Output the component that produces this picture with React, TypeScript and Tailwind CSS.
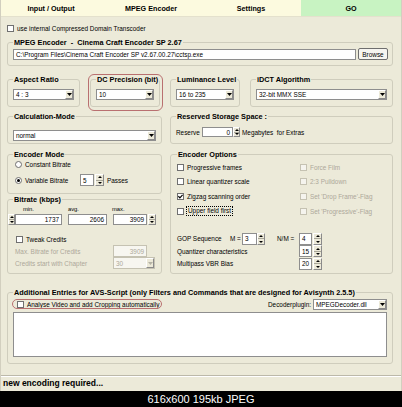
import React from "react";

type Kids = { children?: React.ReactNode; className?: string };

const Down = ({ c = "#000" }: { c?: string }) => (
  <svg width="5" height="3" viewBox="0 0 5 3">
    <path d="M0 0H5L2.5 3Z" fill={c} />
  </svg>
);
const UpS = ({ c = "#000" }: { c?: string }) => (
  <svg width="4" height="2" viewBox="0 0 4 2">
    <path d="M0 2H4L2 0Z" fill={c} />
  </svg>
);
const DownS = ({ c = "#000" }: { c?: string }) => (
  <svg width="4" height="2" viewBox="0 0 4 2">
    <path d="M0 0H4L2 2Z" fill={c} />
  </svg>
);

function Chk({ checked = false, disabled = false, className = "" }: { checked?: boolean; disabled?: boolean; className?: string }) {
  return (
    <span
      className={`w-[7px] h-[7px] shrink-0 border flex items-center justify-center ${
        disabled ? "border-[#c5c2b2] bg-[#f5f4ee]" : "border-[#707070] bg-white"
      } ${className}`}
    >
      {checked && (
        <svg width="5" height="5" viewBox="0 0 5 5">
          <path d="M0.4 2.2L1.9 3.8L4.6 0.9" stroke="#000" strokeWidth="1.2" fill="none" />
        </svg>
      )}
    </span>
  );
}

function Radio({ checked = false, className = "" }: { checked?: boolean; className?: string }) {
  return (
    <span className={`w-[7px] h-[7px] shrink-0 rounded-full border border-[#707070] bg-white flex items-center justify-center ${className}`}>
      {checked && <span className="w-[3px] h-[3px] rounded-full bg-black" />}
    </span>
  );
}

function Spin({ disabled = false, className = "" }: { disabled?: boolean; className?: string }) {
  const c = disabled ? "#b5b3a5" : "#000";
  return (
    <span className={`flex flex-col shrink-0 bg-[#ece9d8] border border-t-white border-l-white border-r-[#8a8a8a] border-b-[#8a8a8a] ${className}`}>
      <span className="flex-1 flex items-center justify-center border-b border-[#a8a698]">
        <UpS c={c} />
      </span>
      <span className="flex-1 flex items-center justify-center">
        <DownS c={c} />
      </span>
    </span>
  );
}

function Box({ children, className = "", disabled = false, right = false }: Kids & { disabled?: boolean; right?: boolean }) {
  return (
    <div
      className={`shrink-0 border flex items-center whitespace-nowrap overflow-hidden ${
        right ? "justify-end pr-[2px]" : "pl-[2px]"
      } ${disabled ? "border-[#c5c2b2] bg-[#f7f6f0] text-[#aca899]" : "border-[#8e8e8e] bg-white"} ${className}`}
    >
      {children}
    </div>
  );
}

function Sel({ value, className = "", disabled = false }: { value: string; className?: string; disabled?: boolean }) {
  return (
    <div
      className={`flex shrink-0 border ${
        disabled ? "border-[#c5c2b2] bg-[#f7f6f0] text-[#aca899]" : "border-[#8e8e8e] bg-white"
      } ${className}`}
    >
      <span className="flex-1 pl-[2px] flex items-center whitespace-nowrap overflow-hidden">{value}</span>
      <span className="w-[8px] shrink-0 bg-[#ece9d8] border border-t-white border-l-white border-r-[#8a8a8a] border-b-[#8a8a8a] flex items-center justify-center">
        <Down c={disabled ? "#b5b3a5" : "#000"} />
      </span>
    </div>
  );
}

function Group({ title, className = "", children }: Kids & { title: string }) {
  return (
    <fieldset className={`min-w-0 border border-[#cfcdbd] rounded-[3px] ${className}`}>
      <legend className="px-[1px] font-bold text-[7.3px] leading-[9px] whitespace-pre text-black">{title}</legend>
      {children}
    </fieldset>
  );
}

function Opt({ label, checked = false, disabled = false, focus = false }: { label: string; checked?: boolean; disabled?: boolean; focus?: boolean }) {
  return (
    <div className={`flex items-center whitespace-nowrap ${disabled ? "text-[#aca899]" : ""}`}>
      <Chk checked={checked} disabled={disabled} />
      {focus ? (
        <span className="ml-[2px] px-[1px] border border-dotted border-black leading-[8px]">{label}</span>
      ) : (
        <span className="ml-[3px]">{label}</span>
      )}
    </div>
  );
}

function Tab({ children, className = "" }: Kids) {
  return (
    <div className={`flex-1 flex items-center justify-center font-bold text-[7.2px] ${className}`}>{children}</div>
  );
}

export default function App() {
  return (
    <div className="w-[402px] h-[407px] bg-black flex flex-col overflow-hidden font-['Liberation_Sans',Arial,sans-serif] text-black">
      <div className="h-[391px] shrink-0 bg-[#ecead9] border-l border-r border-[#d2cfbf] flex flex-col text-[6.4px] leading-[9px]">
        {/* Tabs */}
        <div className="h-[17px] flex shrink-0 border-b border-[#e4e1cd]">
          <Tab className="bg-[#fcfadf]">Input / Output</Tab>
          <Tab className="bg-[#fcfadf]">MPEG Encoder</Tab>
          <Tab className="bg-[#fcfadf]">Settings</Tab>
          <Tab className="bg-[#c8f3c2]">GO</Tab>
        </div>

        <div className="flex flex-col pl-[6px] pr-[8px]">
          <div className="h-[12px] mt-[5px] flex items-center">
            <Chk />
            <span className="ml-[3px]">use internal Compressed Domain Transcoder</span>
          </div>

          <Group title="MPEG Encoder  -  Cinema Craft Encoder SP 2.67" className="mt-[3.5px] pl-[5px] pr-[4px] pb-[5px]">
            <div className="mt-[1.5px] h-[12px] flex items-center">
              <Box className="flex-1 h-[11px]">C:\Program Files\Cinema Craft Encoder SP v2.67.00.27\cctsp.exe</Box>
              <div className="ml-[2px] w-[30px] h-[12px] shrink-0 border border-[#6e6e6e] rounded-[2px] bg-[#f6f5f0] flex items-center justify-center">
                Browse
              </div>
            </div>
          </Group>

          <div className="mt-[8.5px] flex gap-[10px]">
            <Group title="Aspect Ratio" className="w-[73px] px-[5px] pb-[6px]">
              <Sel className="mt-[5.5px] h-[11px]" value="4 : 3" />
            </Group>
            <div className="relative w-[70px] flex">
              <Group title="DC Precision (bit)" className="flex-1 px-[5px] pb-[6px]">
                <Sel className="mt-[5.5px] h-[11px]" value="10" />
              </Group>
              <span className="absolute -left-[2px] -top-[0.5px] -right-[3px] -bottom-[4px] border border-[#b97070] rounded-[6px] pointer-events-none" />
            </div>
            <Group title="Luminance Level" className="w-[70px] px-[5px] pb-[6px]">
              <Sel className="mt-[5.5px] h-[11px]" value="16 to 235" />
            </Group>
            <Group title="iDCT Algorithm" className="flex-1 px-[5px] pb-[6px]">
              <Sel className="mt-[5.5px] h-[11px]" value="32-bit MMX SSE" />
            </Group>
          </div>

          <div className="mt-[4.5px] flex gap-[8px]">
            <Group title="Calculation-Mode" className="w-[155px] px-[5px] pb-[2px]">
              <Sel className="mt-[9.5px] h-[11px]" value="normal" />
            </Group>
            <Group title="Reserved Storage Space :" className="flex-1 px-[5px]">
              <div className="mt-[6.5px] h-[10px] flex items-center">
                <span className="w-[26px]">Reserve</span>
                <Box right className="w-[31px] h-[10px]">0</Box>
                <Spin className="w-[7px] h-[10px]" />
                <span className="ml-[2px] whitespace-pre">Megabytes  for Extras</span>
              </div>
            </Group>
          </div>

          <div className="mt-[5.5px] flex gap-[8px]">
            <div className="w-[155px] flex flex-col">
              <Group title="Encoder Mode" className="px-[5px] pb-[7px]">
                <div className="mt-[0.5px] h-[10px] flex items-center">
                  <Radio className="ml-[2px]" />
                  <span className="ml-[3px]">Constant Bitrate</span>
                </div>
                <div className="mt-[5px] h-[12px] flex items-center">
                  <Radio checked className="ml-[2px]" />
                  <span className="ml-[3px] w-[55px]">Variable Bitrate</span>
                  <Box className="w-[14px] h-[12px]">5</Box>
                  <Spin className="ml-[1px] w-[9px] h-[12px]" />
                  <span className="ml-[3px]">Passes</span>
                </div>
              </Group>
              <Group title="Bitrate (kbps)" className="mt-[0.5px] flex-1 px-[5px] pb-[4px]">
                <div className="mt-[2px] h-[7px] flex items-center text-[5.8px] leading-[7px]">
                  <span className="ml-[10px] w-[45px]">min.</span>
                  <span className="w-[44px]">avg.</span>
                  <span>max.</span>
                </div>
                <div className="mt-[1px] -ml-[5px] h-[11px] flex items-center">
                  <Spin className="w-[7px] h-[11px]" />
                  <Box right className="w-[47px] h-[11px]">1737</Box>
                  <Box right className="ml-[6px] w-[39px] h-[11px]">2606</Box>
                  <Box right className="ml-[6px] w-[34px] h-[11px]">3909</Box>
                  <Spin className="ml-[1px] w-[8px] h-[11px]" />
                </div>
                <div className="mt-[9.5px] h-[10px] flex items-center">
                  <Chk className="ml-[3px]" />
                  <span className="ml-[3px]">Tweak Credits</span>
                </div>
                <div className="mt-[1px] h-[12px] flex items-center text-[#aca899]">
                  <span className="ml-[2px] w-[98px]">Max. Bitrate for Credits</span>
                  <Box right disabled className="w-[34px] h-[12px]">3909</Box>
                </div>
                <div className="h-[12px] flex items-center text-[#aca899]">
                  <span className="ml-[2px] w-[98px]">Credits start with Chapter</span>
                  <Sel disabled className="w-[42px] h-[12px]" value="30" />
                </div>
              </Group>
            </div>

            <Group title="Encoder Options" className="flex-1 px-[6px] pb-[3px]">
              <div className="mt-[1.2px] grid grid-cols-[123px_1fr] auto-rows-[14.7px] items-center">
                <Opt label="Progressive frames" />
                <Opt disabled label="Force Film" />
                <Opt label="Linear quantizer scale" />
                <Opt disabled label="2:3 Pulldown" />
                <Opt checked label="Zigzag scanning order" />
                <Opt disabled label="Set 'Drop Frame'-Flag" />
                <Opt focus label="Upper field first" />
                <Opt disabled label="Set 'Progressive'-Flag" />
              </div>
              <div className="mt-[14.5px] h-[12px] flex items-center">
                <span className="w-[53px]">GOP Sequence</span>
                <span className="w-[12px]">M =</span>
                <Box className="w-[15px] h-[12px]">3</Box>
                <Spin className="w-[8px] h-[12px]" />
                <span className="ml-[12px] w-[22px]">N/M =</span>
                <Box className="w-[13px] h-[12px]">4</Box>
                <Spin className="ml-[1px] w-[9px] h-[12px]" />
              </div>
              <div className="mt-[0.5px] h-[12px] flex items-center">
                <span className="w-[122px]">Quantizer characteristics</span>
                <Box className="w-[13px] h-[12px]">15</Box>
                <Spin className="ml-[1px] w-[9px] h-[12px]" />
              </div>
              <div className="mt-[0.5px] h-[12px] flex items-center">
                <span className="w-[122px]">Multipass VBR Bias</span>
                <Box className="w-[13px] h-[12px]">20</Box>
                <Spin className="ml-[1px] w-[9px] h-[12px]" />
              </div>
            </Group>
          </div>

          <Group
            title="Additional Entries for AVS-Script (only Filters and Commands that are designed for Avisynth 2.5.5)"
            className="mt-[13.5px] px-[5px] pb-[6px]"
          >
            <div className="mt-[2px] h-[11px] flex items-center">
              <div className="relative -ml-[1px] w-[150px] h-[10px] flex items-center">
                <Chk className="ml-[5px]" />
                <span className="ml-[3px] whitespace-nowrap">Analyse Video and add Cropping automatically</span>
                <span className="absolute inset-0 border border-[#b97070] rounded-full pointer-events-none" />
              </div>
              <span className="ml-auto mr-[2px]">Decoderplugin:</span>
              <Sel className="w-[74px] h-[11px]" value="MPEGDecoder.dll" />
            </div>
            <div className="mt-[2.5px] h-[45px] bg-white border border-[#8e8e8e]" />
          </Group>
        </div>

        <div className="mt-[11px] h-[1px] bg-[#bcb9aa] shadow-[0_1px_0_#ffffff]" />
        <div className="mt-[2px] pl-[2px] font-bold text-[8.5px] leading-[10px]">new encoding required...</div>
      </div>
      <div className="flex-1 flex items-center justify-center text-white text-[11px] leading-none">616x600 195kb JPEG</div>
    </div>
  );
}
